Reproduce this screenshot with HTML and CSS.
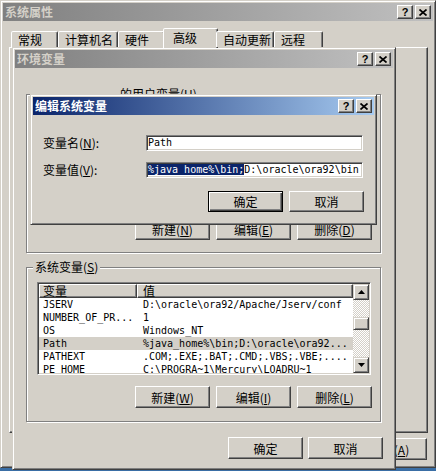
FILE: index.html
```html
<!DOCTYPE html>
<html lang="zh-CN">
<head>
    <meta charset="UTF-8">
    <title>系统属性 - 编辑系统变量</title>
    <link rel="stylesheet" href="styles.css">
</head>
<body>

    <!-- 系统属性 -->
    <div class="win sysprop">
        <div class="caption inactive">
            <span>系统属性</span>
            <span class="cap-btns">
                <span class="cap-btn">?</span>
                <span class="cap-btn"><svg width="8" height="7" viewBox="0 0 8 7"><path d="M0.5 0.5l7 6M7.5 0.5l-7 6" stroke="#000" stroke-width="1.7"/></svg></span>
            </span>
        </div>
        <div class="tabs">
            <span class="tab tab-general">常规</span>
            <span class="tab tab-computer">计算机名</span>
            <span class="tab tab-hardware">硬件</span>
            <span class="tab tab-advanced active">高级</span>
            <span class="tab tab-update">自动更新</span>
            <span class="tab tab-remote">远程</span>
        </div>
        <div class="tab-panel"></div>
        <div class="btn-row sys-buttons">
            <button class="btn">确定</button>
            <button class="btn">取消</button>
            <button class="btn">应用(<u>A</u>)</button>
        </div>
    </div>

    <!-- 环境变量 -->
    <div class="win envdlg">
        <div class="caption inactive">
            <span>环境变量</span>
            <span class="cap-btns">
                <span class="cap-btn">?</span>
                <span class="cap-btn"><svg width="8" height="7" viewBox="0 0 8 7"><path d="M0.5 0.5l7 6M7.5 0.5l-7 6" stroke="#000" stroke-width="1.7"/></svg></span>
            </span>
        </div>
        <div class="env-body">
            <div class="group group-user">
                <span class="group-label label-user">的用户变量(<u>U</u>)</span>
                <div class="listview lv-user"></div>
                <div class="btn-row">
                    <button class="btn">新建(<u>N</u>)</button>
                    <button class="btn">编辑(<u>E</u>)</button>
                    <button class="btn">删除(<u>D</u>)</button>
                </div>
            </div>

            <div class="group group-sys">
                <span class="group-label label-sys">系统变量(<u>S</u>)</span>
                <div class="listview lv-sys">
                    <div class="lv-main">
                        <div class="lv-head"><span>变量</span><span>值</span></div>
                        <div class="lv-row mono"><span>JSERV</span><span>D:\oracle\ora92/Apache/Jserv/conf</span></div>
                        <div class="lv-row mono"><span>NUMBER_OF_PR...</span><span>1</span></div>
                        <div class="lv-row mono"><span>OS</span><span>Windows_NT</span></div>
                        <div class="lv-row mono selected"><span>Path</span><span>%java_home%\bin;D:\oracle\ora92...</span></div>
                        <div class="lv-row mono"><span>PATHEXT</span><span>.COM;.EXE;.BAT;.CMD;.VBS;.VBE;....</span></div>
                        <div class="lv-row mono"><span>PE_HOME</span><span>C:\PROGRA~1\Mercury\LOADRU~1</span></div>
                    </div>
                    <div class="scrollbar">
                        <span class="sb-btn"><svg width="7" height="4" viewBox="0 0 7 4"><path d="M3.5 0L7 4H0z"/></svg></span>
                        <span class="sb-thumb"></span>
                        <span class="sb-btn sb-down"><svg width="7" height="4" viewBox="0 0 7 4"><path d="M0 0h7L3.5 4z"/></svg></span>
                    </div>
                </div>
                <div class="btn-row">
                    <button class="btn">新建(<u>W</u>)</button>
                    <button class="btn">编辑(<u>I</u>)</button>
                    <button class="btn">删除(<u>L</u>)</button>
                </div>
            </div>

            <div class="btn-row env-buttons">
                <button class="btn">确定</button>
                <button class="btn">取消</button>
            </div>
        </div>
    </div>

    <!-- 编辑系统变量 -->
    <div class="win editdlg">
        <div class="caption active">
            <span>编辑系统变量</span>
            <span class="cap-btns">
                <span class="cap-btn">?</span>
                <span class="cap-btn"><svg width="8" height="7" viewBox="0 0 8 7"><path d="M0.5 0.5l7 6M7.5 0.5l-7 6" stroke="#000" stroke-width="1.7"/></svg></span>
            </span>
        </div>
        <div class="edit-body">
            <div class="edit-grid">
                <label>变量名(<u>N</u>):</label>
                <div class="field mono">Path</div>
                <label>变量值(<u>V</u>):</label>
                <div class="field mono"><span class="sel">%java_home%\bin;</span>D:\oracle\ora92\bin</div>
            </div>
            <div class="btn-row edit-buttons">
                <button class="btn default">确定</button>
                <button class="btn">取消</button>
            </div>
        </div>
    </div>

</body>
</html>
```

FILE: styles.css
```css
/* 基本样式 */
* {
    box-sizing: border-box;
}

body {
    margin: 0;
    width: 436px;
    height: 471px;
    position: relative;
    overflow: hidden;
    background: #3a6ea5;
    font-family: "Noto Sans CJK SC", "Noto Sans", sans-serif;
    font-size: 12px;
    color: #000;
}

.mono {
    font-family: "DejaVu Sans Mono", "Liberation Mono", monospace;
    font-size: 10px;
}

/* 窗口 */
.win {
    position: absolute;
    display: flex;
    flex-direction: column;
    padding: 2px;
    background: #d4d0c8;
    border: 1px solid;
    border-color: #d4d0c8 #404040 #404040 #d4d0c8;
    box-shadow: inset 1px 1px #fff, inset -1px -1px #808080;
}

.sysprop {
    left: 0;
    top: 0;
    width: 436px;
    height: 468px;
}

.envdlg {
    left: 12px;
    top: 47px;
    width: 384px;
    height: 423px;
}

.editdlg {
    left: 30px;
    top: 94px;
    width: 347px;
    height: 131px;
}

/* 标题栏 */
.caption {
    flex: none;
    height: 18px;
    display: flex;
    align-items: center;
    justify-content: space-between;
    padding: 0 2px;
    font-weight: bold;
    line-height: 18px;
}

.caption.inactive {
    background: linear-gradient(to right, #808080, #c0c0c0);
    color: #d4d0c8;
}

.caption.active {
    background: linear-gradient(to right, #0a246a, #a6caf0);
    color: #fff;
}

.cap-btns {
    display: flex;
    gap: 2px;
}

.cap-btn {
    width: 16px;
    height: 14px;
    display: flex;
    align-items: center;
    justify-content: center;
    background: #d4d0c8;
    border: 1px solid;
    border-color: #fff #404040 #404040 #fff;
    box-shadow: inset -1px -1px #808080;
    color: #000;
    font-family: "Liberation Sans", sans-serif;
    font-size: 11px;
    font-weight: bold;
    line-height: 12px;
}

/* 选项卡 */
.tabs {
    flex: none;
    position: relative;
    z-index: 1;
    display: flex;
    align-items: flex-end;
    height: 19px;
    margin-top: 7px;
    padding-left: 8px;
}

.tab {
    height: 16px;
    padding-left: 6px;
    line-height: 15px;
    white-space: nowrap;
    background: #d4d0c8;
    border: 1px solid;
    border-bottom: none;
    border-color: #fff #404040 transparent #fff;
    border-radius: 2px 2px 0 0;
    box-shadow: inset -1px 0 #808080;
}

.tab.active {
    height: 20px;
    margin: 0 -2px -1px;
    padding-left: 9px;
    line-height: 17px;
}

.tab-general { width: 47px; }
.tab-computer { width: 60px; }
.tab-hardware { width: 47px; }
.tab-advanced { width: 55px; }
.tab-update { width: 58px; }
.tab-remote { width: 49px; }

.tab-panel {
    flex: none;
    height: 386px;
    margin: 0 5px 0 6px;
    border: 1px solid;
    border-color: #fff #404040 #404040 #fff;
    box-shadow: inset -1px -1px #808080;
}

/* 按钮 */
.btn-row {
    display: flex;
    justify-content: flex-end;
    gap: 6px;
}

.btn {
    width: 75px;
    height: 22px;
    padding: 0;
    display: flex;
    align-items: center;
    justify-content: center;
    font: inherit;
    color: #000;
    background: #d4d0c8;
    border: 1px solid;
    border-color: #fff #404040 #404040 #fff;
    box-shadow: inset -1px -1px #808080;
}

.btn.default {
    border-color: #000;
    box-shadow: inset 1px 1px #fff, inset -1px -1px #404040, inset -2px -2px #808080;
}

.sys-buttons {
    margin-top: 5px;
    padding-right: 6px;
}

/* 环境变量 */
.env-body {
    display: flex;
    flex-direction: column;
    padding: 0 10px 0 11px;
}

.group {
    position: relative;
    width: 355px;
    display: flex;
    flex-direction: column;
    border: 1px solid #808080;
    box-shadow: inset 1px 1px #fff, 1px 1px #fff;
}

.group .btn-row {
    margin-top: 11px;
}

.group-user {
    height: 159px;
    margin-top: 26px;
    padding: 14px 8px 12px 10px;
}

.group-sys {
    height: 155px;
    margin-top: 14px;
    padding: 14px 8px 13px 10px;
}

.group-label {
    position: absolute;
    top: -8px;
    padding: 0 2px;
    line-height: 14px;
    background: #d4d0c8;
}

.label-user { left: 91px; }
.label-sys { left: 6px; }

.env-buttons {
    margin-top: 15px;
    gap: 5px;
}

/* 列表 */
.listview {
    display: flex;
    margin-right: 1px;
    padding: 1px;
    background: #fff;
    border: 1px solid;
    border-color: #808080 #fff #fff #808080;
    box-shadow: inset 1px 1px #404040, inset -1px -1px #d4d0c8;
    overflow: hidden;
}

.lv-user { height: 98px; }
.lv-sys { height: 93px; }

.lv-main {
    flex: 1;
    min-width: 0;
    overflow: hidden;
}

.lv-head,
.lv-row {
    display: grid;
    grid-template-columns: 98px 1fr;
    white-space: nowrap;
}

.lv-head {
    height: 14px;
}

.lv-head span {
    padding-left: 3px;
    line-height: 12px;
    background: #d4d0c8;
    border: 1px solid;
    border-color: #fff #404040 #404040 #fff;
    box-shadow: inset -1px -1px #808080;
}

.lv-head span + span {
    padding-left: 5px;
}

.lv-row {
    height: 13px;
    line-height: 13px;
}

.lv-row span {
    overflow: hidden;
    padding-left: 4px;
}

.lv-row span + span {
    padding-left: 6px;
}

.lv-row.selected {
    background: #d4d0c8;
}

.scrollbar {
    flex: none;
    width: 16px;
    display: flex;
    flex-direction: column;
    background: repeating-conic-gradient(#fff 0 25%, #d4d0c8 0 50%) 0 0 / 2px 2px;
}

.sb-btn,
.sb-thumb {
    flex: none;
    width: 16px;
    background: #d4d0c8;
    border: 1px solid;
    border-color: #d4d0c8 #404040 #404040 #d4d0c8;
    box-shadow: inset 1px 1px #fff, inset -1px -1px #808080;
}

.sb-btn {
    height: 16px;
    display: flex;
    align-items: center;
    justify-content: center;
}

.sb-thumb {
    height: 13px;
    margin-top: 17px;
}

.sb-down {
    margin-top: auto;
}

/* 编辑系统变量 */
.edit-body {
    padding: 20px 10px 0;
}

.edit-grid {
    display: grid;
    grid-template-columns: 103px 217px;
    row-gap: 11px;
    align-items: center;
}

.edit-grid label {
    line-height: 16px;
}

.field {
    height: 16px;
    padding: 1px 0 0 1px;
    line-height: 12px;
    white-space: nowrap;
    overflow: hidden;
    background: #fff;
    border: 1px solid;
    border-color: #808080 #fff #fff #808080;
    box-shadow: inset 1px 1px #404040, inset -1px -1px #d4d0c8;
}

.sel {
    background: #0a246a;
    color: #fff;
}

.edit-buttons {
    margin-top: 13px;
}

.edit-buttons .btn {
    height: 21px;
}
```
